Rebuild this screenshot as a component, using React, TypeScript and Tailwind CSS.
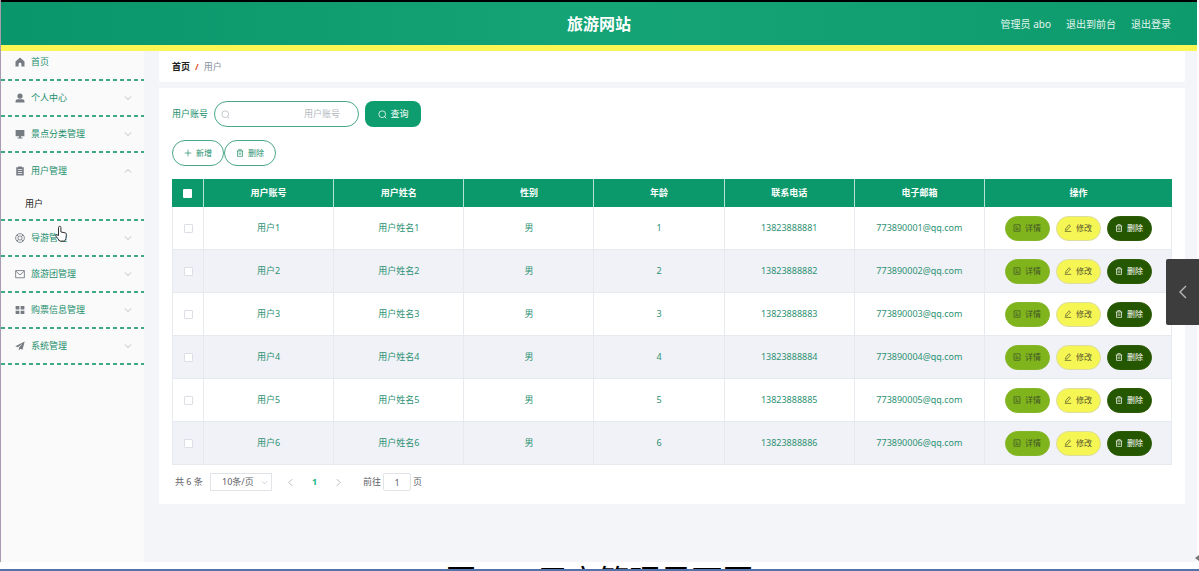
import { useState } from "react";
import type { ReactNode } from "react";
import clsx from "clsx";

type IconName =
  | "home"
  | "user"
  | "platform"
  | "order"
  | "help"
  | "message"
  | "menu"
  | "promotion"
  | "search"
  | "plus"
  | "trash"
  | "detail"
  | "edit"
  | "up"
  | "down"
  | "left"
  | "right";

const solid: Partial<Record<IconName, ReactNode>> = {
  home: <path d="M8 .8 .8 7V15h5v-3.800a2.200 2.200 0 0 1 4.400 0V15h5V7z" />,
  user: (
    <>
      <circle cx="8" cy="4.800" r="4.200" />
      <path d="M.8 15v-1.500A3.500 3.500 0 0 1 4.300 10h7.400a3.500 3.500 0 0 1 3.500 3.500V15z" />
    </>
  ),
  platform: <path d="M1 1.500h14v10H1zM6.500 11.500h3V13.500H12V15H4v-1.500h2.500z" />,
  order: (
    <path
      fillRule="evenodd"
      d="M2 2h3V.8h6V2h3v13.200H2zM4.500 5.200v1.200h7V5.200zm0 3v1.200h7V8.200zm0 3v1.200h7v-1.200z"
    />
  ),
  menu: <path d="M1 1.500h6v5.500H1zM9 1.500h6v5.500H9zM1 9h6v5.500H1zM9 9h6v5.500H9z" />,
  promotion: <path d="M15.500 .8.500 8.200l4 1.700 7.500-6-5.800 6.800V15l2.300-2.800 3.500 1.600z" />,
};

const outline: Partial<Record<IconName, ReactNode>> = {
  help: (
    <>
      <circle cx="8" cy="8" r="7" />
      <rect x="5" y="5" width="6" height="6" rx="1.500" />
      <path d="M3 3l2.500 2.500M13 3l-2.500 2.500M3 13l2.500-2.500M13 13l-2.500-2.500" />
    </>
  ),
  message: <path d="M1 2.500h14v11.500H1zM1.500 3.500 8 9.500l6.500-6" />,
  search: <path d="M7.500 1.500a6 6 0 1 0 0 12 6 6 0 0 0 0-12zM11.800 11.800l3 3" />,
  plus: <path d="M8 1.500v13M1.500 8h13" />,
  trash: <path d="M1.500 4h13M3 4v10.800h10V4M5.500 4V1.200h5V4M6.300 7v4.800M9.700 7v4.800" />,
  detail: <path d="M2 1.500h12v13H2zM5 5.500h3M5 8.200h6M5 11h6" />,
  edit: <path d="M3.500 9 10 1.500l3 2.500-6.500 7.500-3.500 1zM1.500 14.800h13" />,
  up: <path d="M2 11l6-6 6 6" />,
  down: <path d="M2 5l6 6 6-6" />,
  left: <path d="M11 2 5 8l6 6" />,
  right: <path d="M5 2l6 6-6 6" />,
};

function Icon({ name, className }: { name: IconName; className?: string }) {
  const filled = solid[name];
  return (
    <svg
      viewBox="0 0 16 16"
      aria-hidden="true"
      className={clsx("shrink-0", className)}
      fill={filled ? "currentColor" : "none"}
      stroke={filled ? "none" : "currentColor"}
      strokeWidth="1.4"
    >
      {filled ?? outline[name]}
    </svg>
  );
}

const menus: { label: string; icon: IconName; children?: string[] }[] = [
  { label: "首页", icon: "home" },
  { label: "个人中心", icon: "user", children: ["个人信息"] },
  { label: "景点分类管理", icon: "platform", children: ["景点分类"] },
  { label: "用户管理", icon: "order", children: ["用户"] },
  { label: "导游管理", icon: "help", children: ["导游"] },
  { label: "旅游团管理", icon: "message", children: ["旅游团"] },
  { label: "购票信息管理", icon: "menu", children: ["购票信息"] },
  { label: "系统管理", icon: "promotion", children: ["系统"] },
];

const columns = ["用户账号", "用户姓名", "性别", "年龄", "联系电话", "电子邮箱"];

const users = [1, 2, 3, 4, 5, 6].map((n) => ({
  id: n,
  account: `用户${n}`,
  name: `用户姓名${n}`,
  gender: "男",
  age: n,
  phone: `1382388888${n}`,
  email: `77389000${n}@qq.com`,
}));

function Header() {
  return (
    <header className="relative z-10 grid h-[51px] grid-cols-[1fr_auto_1fr] items-center border-t-2 border-b-6 border-t-black border-b-[#fbf654] bg-linear-to-r from-[#08966a] via-[#15a476] to-[#0d9b6e] px-[26px] text-white">
      <h1 className="col-start-2 text-base font-bold">旅游网站</h1>
      <nav className="flex justify-end gap-[15px] text-[10px] text-[#e2f5ee]">
        <span>管理员 abo</span>
        <a href="#front">退出到前台</a>
        <a href="#logout">退出登录</a>
      </nav>
    </header>
  );
}

function Sidebar() {
  const [open, setOpen] = useState("用户管理");

  return (
    <aside className="-mt-[6px] w-[143px] shrink-0 bg-[#fafafa] text-[#238f6d]">
      {menus.map((m) => {
        const isOpen = open === m.label;
        return (
          <div key={m.label}>
            <button
              onClick={() => setOpen(isOpen ? "" : m.label)}
              className={clsx("flex w-full items-center pr-3 pl-[14px]", isOpen ? "h-9" : "h-[34px]")}
            >
              <Icon name={m.icon} className="mr-[6px] size-[10px] text-[#777b82]" />
              {m.label}
              {m.children && (
                <Icon name={isOpen ? "up" : "down"} className="ml-auto size-2 text-[#9aa0a5]" />
              )}
            </button>
            {isOpen &&
              m.children?.map((c) => (
                <a key={c} href="#users" className="flex h-[30px] items-center pl-6 text-[#222]">
                  {c}
                </a>
              ))}
            <div className="h-[2px] bg-[repeating-linear-gradient(90deg,#3fa884_0_4px,transparent_4px_7px)]" />
          </div>
        );
      })}
    </aside>
  );
}

function SearchForm() {
  return (
    <form className="flex items-center" onSubmit={(e) => e.preventDefault()}>
      <label htmlFor="account" className="mr-[6px] text-[#238f6d]">
        用户账号
      </label>
      <div className="mr-[6px] flex h-[26px] w-[145px] items-center rounded-full border border-[#4aa88a] pr-[18px] pl-[6px]">
        <Icon name="search" className="size-[9px] text-[#b4b8be]" />
        <input
          id="account"
          placeholder="用户账号"
          className="w-full min-w-0 text-right outline-none placeholder:text-[#b4b8be]"
        />
      </div>
      <button className="flex h-[26px] w-14 items-center justify-center gap-1 rounded-lg bg-[#0d9d6e] text-white">
        <Icon name="search" className="size-[9px]" />
        查询
      </button>
    </form>
  );
}

const outlineButton =
  "flex h-[26px] w-[52px] items-center justify-center gap-1 rounded-full border border-[#4aa88a] text-[8px] text-[#238f6d]";
const rowButton = "flex h-[25px] w-[45px] items-center justify-center gap-1 rounded-full border text-[8px]";

function UserTable() {
  const cell = "border-r border-b border-[#e6e9ee]";
  return (
    <table className="w-full table-fixed border-separate border-spacing-0 text-center">
      <thead>
        <tr className="h-7 bg-[#0b996b] text-white">
          <th className="w-8 border-r border-white/70">
            <input
              type="checkbox"
              aria-label="全选"
              className="mx-auto block size-[9px] appearance-none rounded-[1px] bg-white checked:bg-[#fbf654]"
            />
          </th>
          {columns.map((c) => (
            <th key={c} className="border-r border-white/70 font-bold">
              {c}
            </th>
          ))}
          <th className="w-[187px] font-bold">操作</th>
        </tr>
      </thead>
      <tbody className="text-[#2d9173]">
        {users.map((u) => (
          <tr key={u.id} className="h-[43px] even:bg-[#f0f2f7]">
            <td className={clsx(cell, "border-l")}>
              <input
                type="checkbox"
                aria-label={u.account}
                className="mx-auto block size-[9px] appearance-none rounded-[1px] border border-[#dcdfe6] bg-white checked:bg-[#0d9d6e]"
              />
            </td>
            <td className={cell}>{u.account}</td>
            <td className={cell}>{u.name}</td>
            <td className={cell}>{u.gender}</td>
            <td className={cell}>{u.age}</td>
            <td className={cell}>{u.phone}</td>
            <td className={cell}>{u.email}</td>
            <td className={cell}>
              <div className="flex justify-center gap-[6px]">
                <button className={clsx(rowButton, "border-[#86b62a] bg-[#7fb41c] text-[#3f5428]")}>
                  <Icon name="detail" className="size-2" />
                  详情
                </button>
                <button className={clsx(rowButton, "border-[#dcdda0] bg-[#f5f653] text-[#55562f]")}>
                  <Icon name="edit" className="size-2" />
                  修改
                </button>
                <button className={clsx(rowButton, "border-[#2c5c08] bg-[#255700] text-white")}>
                  <Icon name="trash" className="size-2" />
                  删除
                </button>
              </div>
            </td>
          </tr>
        ))}
      </tbody>
    </table>
  );
}

function Pagination() {
  return (
    <div className="mt-2 flex h-[18px] items-center pl-[3px] text-[#606266]">
      <span className="w-[35px]">共 6 条</span>
      <div className="relative h-full w-[62px]">
        <select
          aria-label="每页条数"
          className="h-full w-full appearance-none border border-[#e0e3e8] bg-white pl-[11px] outline-none"
        >
          <option>10条/页</option>
          <option>20条/页</option>
        </select>
        <Icon name="down" className="pointer-events-none absolute top-[6px] right-1 size-[7px] text-[#b4b8be]" />
      </div>
      <button aria-label="上一页" className="ml-[14px] text-[#a5a9b0]">
        <Icon name="left" className="size-[9px]" />
      </button>
      <button className="mx-[14px] w-[11px] font-bold text-[#12b886]">1</button>
      <button aria-label="下一页" className="text-[#a5a9b0]">
        <Icon name="right" className="size-[9px]" />
      </button>
      <label className="ml-5 flex h-full items-center gap-[2px]">
        前往
        <input
          defaultValue="1"
          className="h-full w-7 rounded-xs border border-[#e0e3e8] text-center outline-none"
        />
        页
      </label>
    </div>
  );
}

export default function App() {
  return (
    <div
      lang="zh-CN"
      className="relative flex min-h-screen flex-col bg-white font-['Noto_Sans','Noto_Sans_CJK_SC',sans-serif] text-[9px] leading-3"
    >
      <div className="mr-[2px] flex flex-1 flex-col border-l border-[#a99bb0] bg-[#f3f5f8]">
        <Header />
        <div className="flex flex-1">
          <Sidebar />
          <main className="min-w-0 flex-1 pr-3 pl-[15px]">
            <nav className="mb-[6px] flex h-[31px] items-center gap-[5px] rounded-b-xs bg-white px-[13px]">
              <a href="#home" className="font-bold text-[#222]">
                首页
              </a>
              <span className="font-bold text-[#e0562f]">/</span>
              <span className="text-[#8a9099]">用户</span>
            </nav>
            <section className="rounded-xs bg-white px-[13px] py-[13px]">
              <SearchForm />
              <div className="my-[13px] flex">
                <button className={outlineButton}>
                  <Icon name="plus" className="size-2" />
                  新增
                </button>
                <button className={outlineButton}>
                  <Icon name="trash" className="size-2" />
                  删除
                </button>
              </div>
              <UserTable />
              <Pagination />
            </section>
          </main>
        </div>
      </div>

      {/* Caption strip, cut off by the window edge */}
      <footer className="flex h-[9px] justify-center gap-[60px] overflow-hidden border-b-2 border-[#5573a8] text-[31px] leading-9 text-black">
        <span>图</span>
        <span>用户管理界面图</span>
      </footer>

      {/* Drawer handle */}
      <button
        aria-label="展开"
        className="absolute top-[259px] right-0 z-20 flex h-[66px] w-[33px] items-center justify-center rounded-l-xs bg-[#3d3d3d] text-[#b8b8b8]"
      >
        <Icon name="left" className="size-4" />
      </button>
      <svg viewBox="0 0 4 6" aria-hidden="true" className="absolute right-0 bottom-[10px] h-[6px] w-1 fill-[#777]">
        <path d="M4 0v6L0 3z" />
      </svg>

      {/* Hand pointer */}
      <svg
        viewBox="0 0 14 18"
        aria-hidden="true"
        className="pointer-events-none absolute top-[225px] left-[54px] z-20 h-[18px] w-[14px] fill-white stroke-[#333]"
      >
        <path
          strokeLinejoin="round"
          d="M4.500 10.500V2.500a1.200 1.200 0 0 1 2.400 0V7l4.200.8q1.400.3 1.300 1.800l-.5 4-1.200 2.500H5.800L2 11.200q-.6-1.200.6-1.500z"
        />
      </svg>
    </div>
  );
}
